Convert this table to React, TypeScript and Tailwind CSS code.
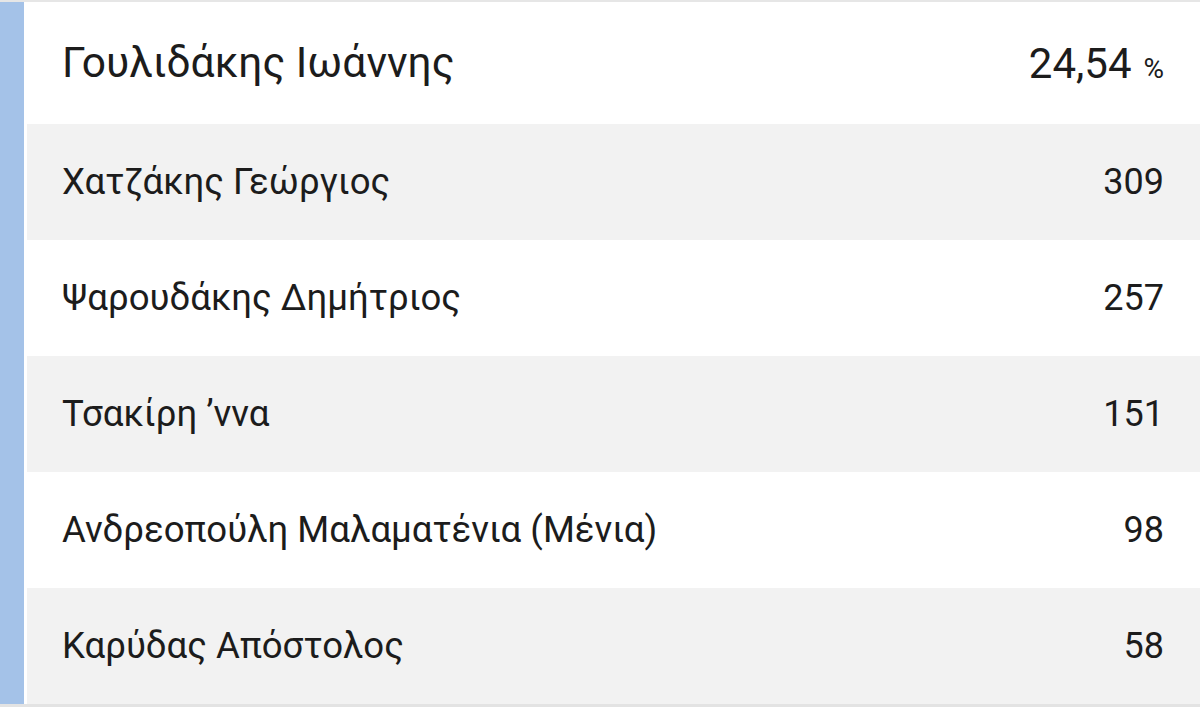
const rows = [
  { name: "Χατζάκης Γεώργιος", votes: "309" },
  { name: "Ψαρουδάκης Δημήτριος", votes: "257" },
  { name: "Τσακίρη ’ννα", votes: "151" },
  { name: "Ανδρεοπούλη Μαλαματένια (Μένια)", votes: "98" },
  { name: "Καρύδας Απόστολος", votes: "58" },
]

export default function App() {
  return (
    <div
      className="w-[1200px] h-[707px] bg-white flex flex-col text-[#1c1c1c] overflow-hidden"
      style={{ fontFamily: "Roboto, 'Noto Sans', sans-serif" }}
    >
      <div className="h-[2px] bg-[#e6e6e6]" />
      <div className="flex flex-1">
        <div className="w-[24px] bg-[#a4c2e8]" />
        <div className="flex-1 pl-[3px] flex flex-col">
          {/* header row */}
          <div className="h-[122px] flex items-center justify-between pl-[35px] pr-[36px]">
            <span className="text-[42.5px]">Γουλιδάκης Ιωάννης</span>
            <span className="text-[42px]">
              24,54<span className="text-[28px] ml-[12px]">%</span>
            </span>
          </div>
          {rows.map((r, i) => (
            <div
              key={r.name}
              className={`h-[116px] flex items-center justify-between pl-[35px] pr-[36px] ${
                i % 2 === 0 ? "bg-[#f2f2f2]" : "bg-white"
              }`}
            >
              <span className="text-[36.6px]">{r.name}</span>
              <span className="text-[36px]">{r.votes}</span>
            </div>
          ))}
        </div>
      </div>
      <div className="h-[3px] bg-[#e3e3e3]" />
    </div>
  )
}
